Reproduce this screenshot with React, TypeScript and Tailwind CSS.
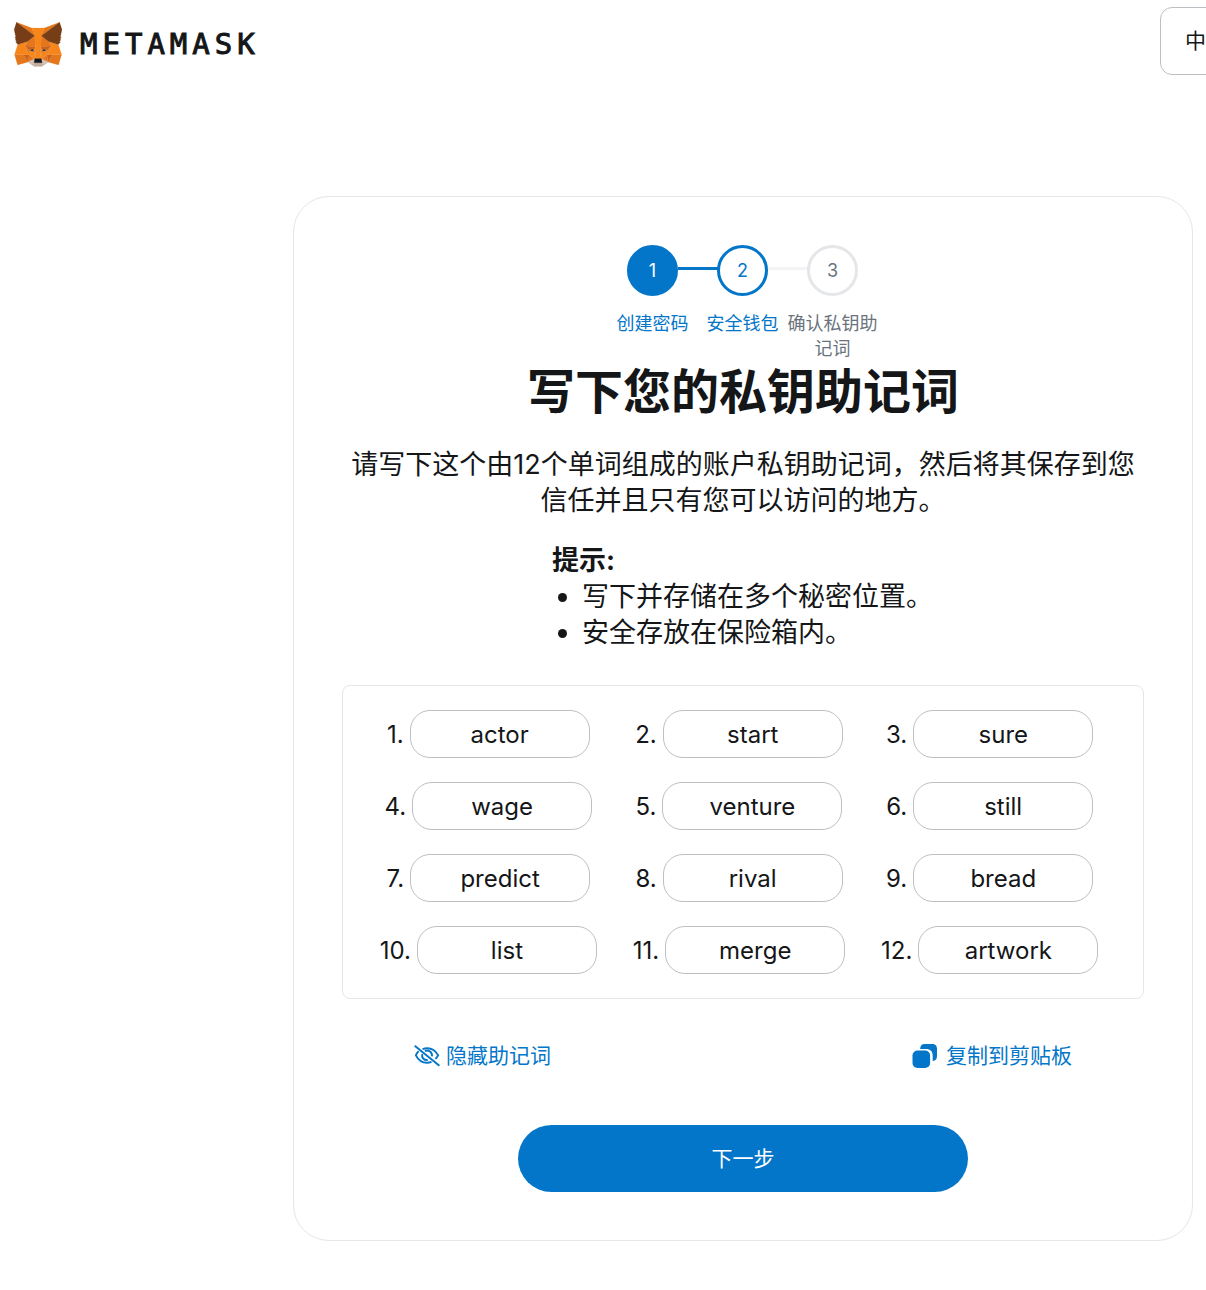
import React from "react";

const WORDS = [
  "actor", "start", "sure",
  "wage", "venture", "still",
  "predict", "rival", "bread",
  "list", "merge", "artwork",
];

const FOX: [string, string][] = [
  ["#E2761B", "274.1,35.5 174.6,109.4 193,65.8"],
  ["#E4761B", "44.4,35.5 143.1,110.1 125.6,65.8"],
  ["#E4761B", "238.3,206.8 211.8,247.4 268.5,263 284.8,207.7"],
  ["#E4761B", "33.9,207.7 50.1,263 106.8,247.4 80.3,206.8"],
  ["#E4761B", "103.6,138.2 87.8,162.1 144.1,164.6 142.1,104.1"],
  ["#E4761B", "214.9,138.2 175.9,103.4 174.6,164.6 230.8,162.1"],
  ["#E4761B", "106.8,247.4 140.6,230.9 111.4,208.1"],
  ["#E4761B", "177.9,230.9 211.8,247.4 207.1,208.1"],
  ["#D7C1B3", "211.8,247.4 177.9,230.9 180.6,253 180.3,262.3"],
  ["#D7C1B3", "106.8,247.4 138.3,262.3 138.1,253 140.6,230.9"],
  ["#233447", "138.8,193.5 110.6,185.2 130.5,176.1"],
  ["#233447", "179.7,193.5 188,176.1 208,185.2"],
  ["#CD6116", "106.8,247.4 111.6,206.8 80.3,207.7"],
  ["#CD6116", "207,206.8 211.8,247.4 238.3,207.7"],
  ["#CD6116", "230.8,162.1 174.6,164.6 179.8,193.5 188.1,176.1 208.1,185.2"],
  ["#CD6116", "110.6,185.2 130.6,176.1 138.8,193.5 144.1,164.6 87.8,162.1"],
  ["#E4751F", "87.8,162.1 111.4,208.1 110.6,185.2"],
  ["#E4751F", "208.1,185.2 207.1,208.1 230.8,162.1"],
  ["#E4751F", "144.1,164.6 138.8,193.5 145.4,227.6 146.9,182.7"],
  ["#E4751F", "174.6,164.6 171.9,182.6 173.1,227.6 179.8,193.5"],
  ["#F6851B", "179.8,193.5 173.1,227.6 177.9,230.9 207.1,208.1 208.1,185.2"],
  ["#F6851B", "110.6,185.2 111.4,208.1 140.6,230.9 145.4,227.6 138.8,193.5"],
  ["#C0AD9E", "180.3,262.3 180.6,253 178.1,250.8 140.4,250.8 138.1,253 138.3,262.3 106.8,247.4 117.8,256.4 140.1,271.9 178.4,271.9 200.8,256.4 211.8,247.4"],
  ["#161616", "177.9,230.9 173.1,227.6 145.4,227.6 140.6,230.9 138.1,253 140.4,250.8 178.1,250.8 180.6,253"],
  ["#F6851B", "267.2,153.5 214.9,138.2 230.8,162.1 207.1,208.1 238.3,207.7 284.8,207.7"],
  ["#F6851B", "103.6,138.2 51.3,153.5 33.9,207.7 80.3,207.7 111.4,208.1 87.8,162.1"],
  ["#F6851B", "174.6,164.6 177.9,106.9 193.1,65.8 125.6,65.8 140.6,106.9 144.1,164.6 145.3,182.8 145.4,227.6 173.1,227.6 173.3,182.8"],
  ["#763D16", "278.3,114.2 286.8,73.4 274.1,35.5 177.9,106.9 214.9,138.2 267.2,153.5 278.8,140 273.8,136.4 281.8,129.1 275.6,124.3 283.6,118.2"],
  ["#763D16", "31.8,73.4 40.3,114.2 34.9,118.2 42.9,124.3 36.8,129.1 44.8,136.4 39.8,140 51.3,153.5 103.6,138.2 140.6,106.9 44.4,35.5"],
];

function Fox() {
  return (
    <svg viewBox="31 35 256 238" className="h-[45px] w-12 shrink-0" aria-hidden="true">
      {FOX.map(([fill, points], i) => (
        <polygon key={i} fill={fill} stroke={fill} strokeLinejoin="round" points={points} />
      ))}
    </svg>
  );
}

function EyeSlashIcon() {
  return (
    <svg viewBox="0 0 26 22" className="h-[22px] w-[26px]" fill="none" stroke="currentColor" strokeWidth="1.9" aria-hidden="true">
      <path d="M0.700 0.800 25.400 20.800" />
      <path d="M8.600 4.200C10 3.600 11.500 3.300 13.200 3.300c4.800 0 8.600 2.700 10.900 7-.7 1.400-1.600 2.600-2.700 3.600" />
      <path d="M4.600 6.100C3.500 7.200 2.600 8.600 1.900 10.300c2.200 4.400 6.200 7.400 11.100 7.400 1.600 0 3.100-.3 4.500-.9" />
      <path d="M10.900 6.100c3.600-1.700 7.600 1 7.100 5.200" />
      <path d="M8.300 9c-1 3.600 1.600 6.400 5.400 6" />
    </svg>
  );
}

function CopyIcon() {
  return (
    <svg viewBox="0 0 26 26" className="h-[26px] w-[26px]" fill="currentColor" aria-hidden="true">
      <path d="M13.300 1h6.400C23.600 1 25 2.500 25 6.300v6.400c0 3.300-1.200 4.900-4.300 5.200v-4.400c0-5.500-2-7.400-7.400-7.400H8.100C8.500 2.300 9.900 1 13.300 1Z" />
      <rect x="0.500" y="7.600" width="17.600" height="17.400" rx="5" />
    </svg>
  );
}

function Step({ n, label, circle, text, line }: { n: number; label: string; circle: string; text: string; line?: string }) {
  return (
    <li className="relative flex w-[90px] flex-col items-center">
      {line && <span className={`absolute top-[22px] left-[70px] h-[3px] w-10 ${line}`} />}
      <span className={`flex size-[51px] items-center justify-center rounded-full border-[3px] text-lg ${circle}`}>{n}</span>
      <span className={`mt-[15px] text-center text-lg leading-[25px] ${text}`}>{label}</span>
    </li>
  );
}

export default function App() {
  return (
    <div className="min-h-screen overflow-x-clip bg-white font-['Inter','Noto_Sans_CJK_SC',sans-serif] text-[#141618]">
      <header className="flex items-start justify-between overflow-hidden pt-[7px] pl-3.5">
        <a href="#home" className="mt-3.5 flex items-center gap-[18px]" aria-label="MetaMask">
          <Fox />
          <span className="font-['DejaVu_Sans_Mono',monospace] text-[29px] leading-[46px] tracking-[5px] [-webkit-text-stroke:1px_#141618]">METAMASK</span>
        </a>
        <select aria-label="语言" className="-mr-[180px] h-[68px] w-[226px] appearance-none rounded-xl border border-[#bbc0c5] bg-white pl-6 text-[21px]">
          <option>中文（简体）</option>
          <option>English</option>
        </select>
      </header>

      <main className="mt-[121px] mr-[13px] mb-[49px] ml-auto max-w-[900px] rounded-[36px] border border-[#e4e6e9] p-12">
        <ol className="flex justify-center pr-px">
          <Step n={1} label="创建密码" circle="border-[#0376c9] bg-[#0376c9] text-white" text="text-[#0376c9]" line="bg-[#0376c9]" />
          <Step n={2} label="安全钱包" circle="border-[#0376c9] text-[#0376c9]" text="text-[#0376c9]" line="bg-[#f2f4f6]" />
          <Step n={3} label="确认私钥助记词" circle="border-[#e4e6e9] text-[#6a737d]" text="text-[#6a737d]" />
        </ol>
        <h1 className="mt-px text-center text-5xl leading-[60px] font-bold">写下您的私钥助记词</h1>
        <p className="mt-[25px] text-center text-[27px] leading-9">
          请写下这个由12个单词组成的账户私钥助记词，然后将其保存到您信任并且只有您可以访问的地方。
        </p>
        <section className="mx-auto mt-6 w-[382px] text-[27px] leading-9">
          <h2 className="font-bold">提示:</h2>
          <ul className="list-disc pl-[30px]">
            <li>写下并存储在多个秘密位置。</li>
            <li>安全存放在保险箱内。</li>
          </ul>
        </section>

        <ol className="mt-[34px] grid grid-cols-3 gap-y-6 rounded-lg border border-[#e4e6e9] p-6">
          {WORDS.map((word, i) => (
            <li key={word} className="flex items-center justify-center gap-1.5 pr-2 text-2xl">
              <span className="pt-0.5">{i + 1}.</span>
              <span className="flex h-12 w-[180px] items-center justify-center rounded-[20px] border border-[#bbc0c5] pt-0.5">{word}</span>
            </li>
          ))}
        </ol>

        <div className="mt-10 flex justify-between px-[72px] text-[21px] leading-[34px] text-[#0376c9]">
          <button type="button" className="flex items-center gap-1.5">
            <EyeSlashIcon />
            隐藏助记词
          </button>
          <button type="button" className="flex items-center gap-2">
            <CopyIcon />
            复制到剪贴板
          </button>
        </div>

        <button type="button" className="mx-auto mt-[52px] block h-[67px] w-full max-w-[450px] rounded-full bg-[#0376c9] text-[21px] text-white">
          下一步
        </button>
      </main>
    </div>
  );
}
